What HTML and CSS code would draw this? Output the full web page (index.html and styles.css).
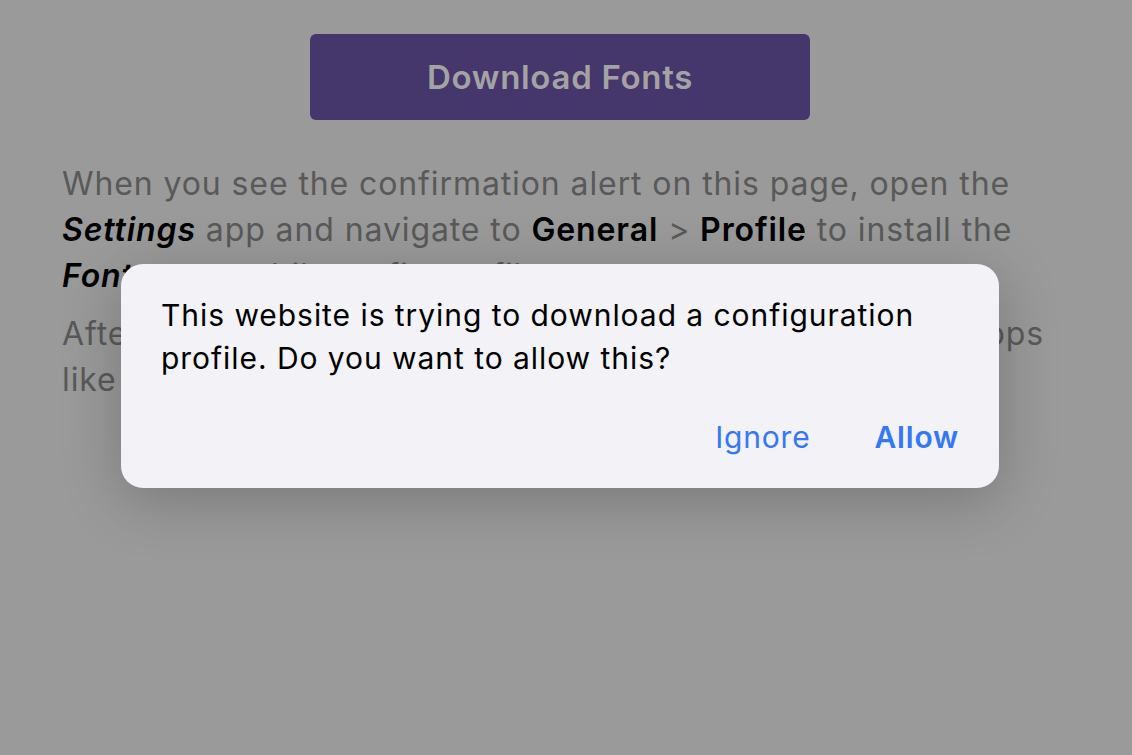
FILE: index.html
```html
<!DOCTYPE html>
<html lang="en">
  <head>
    <meta charset="UTF-8" />
    <meta name="viewport" content="width=device-width, initial-scale=1.0" />
    <title>Download Fonts</title>
    <link rel="stylesheet" href="styles.css">
  </head>
  <body>
    <div class="page">
      <div class="actions">
        <button class="download-button">Download Fonts</button>
      </div>
      <p class="info">
        When you see the confirmation alert on this page, open the<br />
        <b><i>Settings</i></b> app and navigate to <b>General</b> &gt;
        <b>Profile</b> to install the<br />
        <b><i>Fontcase</i></b> mobileconfig profile.
      </p>
      <p class="info">
        After installing the profile, the new fonts will work in all apps<br />
        like Pages and Keynote.
      </p>
    </div>

    <div class="alert">
      <p class="alert-text">
        This website is trying to download a configuration<br />
        profile. Do you want to allow this?
      </p>
      <div class="alert-buttons">
        <button class="alert-button">Ignore</button>
        <button class="alert-button primary">Allow</button>
      </div>
    </div>
  </body>
</html>
```

FILE: styles.css
```css
body {
  margin: 0;
  background-color: #9a9a9a;
  font-family: Inter, "Noto Sans", sans-serif;
  height: 755px;
  overflow: hidden;
  position: relative;
}
.page {
  padding: 34px 62px 0 62px;
}
.actions {
  display: flex;
  justify-content: center;
  padding-right: 12px;
}
.download-button {
  width: 500px;
  height: 86px;
  border: 0;
  border-radius: 6px;
  background-color: #45366b;
  color: #a3a3a3;
  font-family: Inter, sans-serif;
  font-size: 33px;
  font-weight: 600;
  letter-spacing: 0.7px;
  cursor: pointer;
}
.info {
  margin: 41px 0 0 0;
  font-size: 32px;
  line-height: 46px;
  color: #595959;
  letter-spacing: 0.9px;
  white-space: nowrap;
}
.info + .info {
  margin-top: 12px;
  word-spacing: 1.6px;
}
.info b {
  color: #000;
  font-weight: 600;
}
.alert {
  position: absolute;
  top: 264px;
  left: 121px;
  width: 878px;
  height: 224px;
  box-sizing: border-box;
  padding: 30px 40px 0 40px;
  background-color: #f2f2f7;
  border-radius: 22px;
  box-shadow: 0 12px 60px rgba(0, 0, 0, 0.22);
}
.alert-text {
  margin: 0;
  font-size: 30px;
  line-height: 43px;
  color: #000;
  letter-spacing: 0.95px;
  white-space: nowrap;
}
.alert-buttons {
  display: flex;
  justify-content: flex-end;
  gap: 64px;
  margin-top: 39px;
}
.alert-button {
  background: none;
  border: 0;
  padding: 0;
  font-family: Inter, sans-serif;
  font-size: 30px;
  letter-spacing: 0.8px;
  color: #3478f6;
  cursor: pointer;
}
.alert-button.primary {
  font-weight: 600;
}
```
